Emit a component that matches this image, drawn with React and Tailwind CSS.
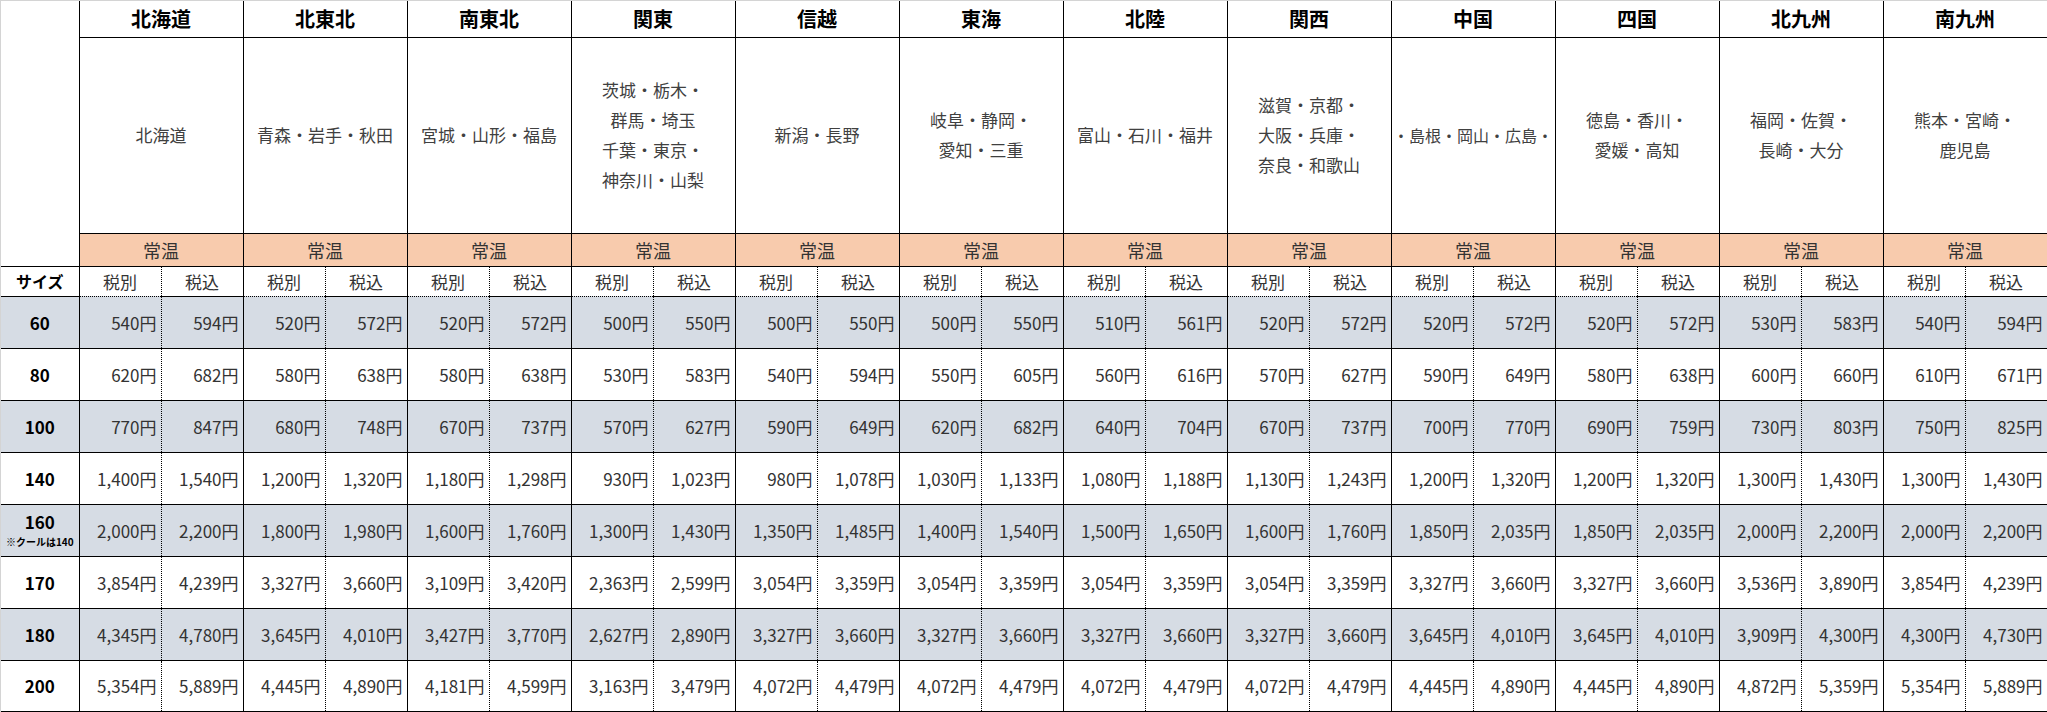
import React from "react";

// 地域ごとの配送料金表（常温）
const regions = [
  { name: "北海道", prefs: ["北海道"] },
  { name: "北東北", prefs: ["青森・岩手・秋田"] },
  { name: "南東北", prefs: ["宮城・山形・福島"] },
  { name: "関東", prefs: ["茨城・栃木・", "群馬・埼玉", "千葉・東京・", "神奈川・山梨"] },
  { name: "信越", prefs: ["新潟・長野"] },
  { name: "東海", prefs: ["岐阜・静岡・", "愛知・三重"] },
  { name: "北陸", prefs: ["富山・石川・福井"] },
  { name: "関西", prefs: ["滋賀・京都・", "大阪・兵庫・", "奈良・和歌山"] },
  { name: "中国", prefs: ["・島根・岡山・広島・"], tight: true },
  { name: "四国", prefs: ["徳島・香川・", "愛媛・高知"] },
  { name: "北九州", prefs: ["福岡・佐賀・", "長崎・大分"] },
  { name: "南九州", prefs: ["熊本・宮崎・", "鹿児島"] },
];

const rows = [
  { size: "60", prices: [540, 594, 520, 572, 520, 572, 500, 550, 500, 550, 500, 550, 510, 561, 520, 572, 520, 572, 520, 572, 530, 583, 540, 594] },
  { size: "80", prices: [620, 682, 580, 638, 580, 638, 530, 583, 540, 594, 550, 605, 560, 616, 570, 627, 590, 649, 580, 638, 600, 660, 610, 671] },
  { size: "100", prices: [770, 847, 680, 748, 670, 737, 570, 627, 590, 649, 620, 682, 640, 704, 670, 737, 700, 770, 690, 759, 730, 803, 750, 825] },
  { size: "140", prices: [1400, 1540, 1200, 1320, 1180, 1298, 930, 1023, 980, 1078, 1030, 1133, 1080, 1188, 1130, 1243, 1200, 1320, 1200, 1320, 1300, 1430, 1300, 1430] },
  { size: "160", note: "※クールは140", prices: [2000, 2200, 1800, 1980, 1600, 1760, 1300, 1430, 1350, 1485, 1400, 1540, 1500, 1650, 1600, 1760, 1850, 2035, 1850, 2035, 2000, 2200, 2000, 2200] },
  { size: "170", prices: [3854, 4239, 3327, 3660, 3109, 3420, 2363, 2599, 3054, 3359, 3054, 3359, 3054, 3359, 3054, 3359, 3327, 3660, 3327, 3660, 3536, 3890, 3854, 4239] },
  { size: "180", prices: [4345, 4780, 3645, 4010, 3427, 3770, 2627, 2890, 3327, 3660, 3327, 3660, 3327, 3660, 3327, 3660, 3645, 4010, 3645, 4010, 3909, 4300, 4300, 4730] },
  { size: "200", prices: [5354, 5889, 4445, 4890, 4181, 4599, 3163, 3479, 4072, 4479, 4072, 4479, 4072, 4479, 4072, 4479, 4445, 4890, 4445, 4890, 4872, 5359, 5354, 5889] },
];

const yen = (n) => n.toLocaleString("en-US") + "円";

export default function App() {
  return (
    <div className="w-[2047px] h-[712px] bg-white border-t border-l border-[#d4d4d4] overflow-hidden font-['Noto_Sans_CJK_JP',sans-serif] text-[#333]">
      <table className="table-fixed border-collapse w-[2046px]">
        <colgroup>
          <col className="w-[78px]" />
          {regions.map((r) => (
            <React.Fragment key={r.name}>
              <col className="w-[82px]" />
              <col className="w-[82px]" />
            </React.Fragment>
          ))}
        </colgroup>
        <tbody>
          {/* 地域名 */}
          <tr className="h-[36px]">
            <td rowSpan={3} className="p-0 border-b border-black"></td>
            {regions.map((r) => (
              <td
                key={r.name}
                colSpan={2}
                className="p-0 text-center text-[20px] font-bold text-black leading-none border-x border-b border-black"
              >
                {r.name}
              </td>
            ))}
          </tr>
          {/* 都道府県 */}
          <tr className="h-[196px]">
            {regions.map((r) => (
              <td
                key={r.name}
                colSpan={2}
                className={`p-0 text-center leading-[30px] text-[#404040] whitespace-nowrap overflow-hidden border-x border-black ${
                  r.tight ? "text-[16px]" : "text-[17px]"
                }`}
              >
                {r.prefs.map((p) => (
                  <div key={p}>{p}</div>
                ))}
              </td>
            ))}
          </tr>
          {/* 常温 */}
          <tr className="h-[33px]">
            {regions.map((r) => (
              <td
                key={r.name}
                colSpan={2}
                className="p-0 text-center text-[18px] leading-none bg-[#f8cbad] border border-black"
              >
                常温
              </td>
            ))}
          </tr>
          {/* 税別・税込 */}
          <tr className="h-[30px]">
            <td className="p-0 text-center text-[16px] font-bold text-black leading-none border-b border-r border-black">
              サイズ
            </td>
            {regions.map((r) => (
              <React.Fragment key={r.name}>
                <td className="p-0 text-center text-[17px] leading-none border-l border-black border-b border-r border-r-black border-dotted">
                  税別
                </td>
                <td className="p-0 text-center text-[17px] leading-none border-r border-solid border-black border-b">
                  税込
                </td>
              </React.Fragment>
            ))}
          </tr>
          {/* 料金 */}
          {rows.map((row, i) => {
            const bg = i % 2 === 0 ? "bg-[#d6dce4]" : "bg-white";
            const last = i === rows.length - 1;
            return (
              <tr key={row.size} className={`h-[52px] ${bg}`}>
                <td
                  className={`p-0 text-center text-black font-bold border-r border-black border-solid ${
                    last ? "border-b-[3px]" : "border-b"
                  }`}
                >
                  <div className="text-[17px] leading-none">{row.size}</div>
                  {row.note && (
                    <div className="text-[10px] leading-none mt-[7px] whitespace-nowrap">{row.note}</div>
                  )}
                </td>
                {row.prices.map((p, j) => (
                  <td
                    key={j}
                    className={`p-0 pr-[4px] text-right text-[17px] leading-none whitespace-nowrap border-black ${
                      last ? "border-b-[3px] border-solid" : "border-b border-solid"
                    } ${j % 2 === 0 ? "border-r border-r-black [border-right-style:dotted]" : "border-r"}`}
                  >
                    {yen(p)}
                  </td>
                ))}
              </tr>
            );
          })}
        </tbody>
      </table>
    </div>
  );
}
